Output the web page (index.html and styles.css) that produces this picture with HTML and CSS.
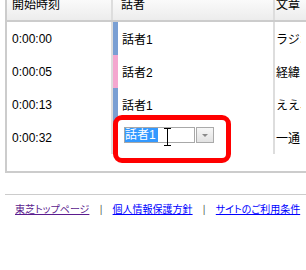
FILE: index.html
```html
<!DOCTYPE html>
<html>
<head>
  <meta charset="UTF-8" />
  <link rel="stylesheet" href="styles.css">
</head>
<body>
  <div id="grid">
    <div class="row head">
      <div class="cell c1"><span>開始時刻</span></div>
      <div class="cell c2"><span>話者</span></div>
      <div class="cell c3"><span>文章</span></div>
    </div>
    <div class="row">
      <div class="cell c1">0:00:00</div>
      <div class="cell c2 blue">話者1</div>
      <div class="cell c3">ラジオの収録です</div>
    </div>
    <div class="row">
      <div class="cell c1">0:00:05</div>
      <div class="cell c2 pink">話者2</div>
      <div class="cell c3">経緯について</div>
    </div>
    <div class="row">
      <div class="cell c1">0:00:13</div>
      <div class="cell c2 blue">話者1</div>
      <div class="cell c3">ええ、そうですね</div>
    </div>
    <div class="row">
      <div class="cell c1">0:00:32</div>
      <div class="cell c2 blue editing">
        <div class="combo">
          <div class="comboText"><span class="selected">話者1</span></div>
          <div class="comboButton"><span class="arrow"></span></div>
        </div>
      </div>
      <div class="cell c3">一通り説明します</div>
    </div>
    <!-- highlight around the edited cell -->
    <div id="mark"></div>
    <svg id="ibeam" width="9" height="18" viewBox="0 0 9 18">
      <path d="M1 0.5h2.5M5.5 0.5h2.5M4.5 1v16M1 17.5h2.5M5.5 17.5h2.5M3 0.5h3M3 17.5h3" stroke="#000" stroke-width="1" fill="none"/>
    </svg>
  </div>

  <div id="footer">
    <a href="#" class="visited">東芝トップページ</a>
    <span class="sep">|</span>
    <a href="#">個人情報保護方針</a>
    <span class="sep">|</span>
    <a href="#">サイトのご利用条件</a>
  </div>
</body>
</html>
```

FILE: styles.css
```css
body {
  margin: 0;
  font-family: "Liberation Sans", "Noto Sans CJK JP", sans-serif;
  font-size: 12px;
  color: #000;
  background: #fff;
}
#grid {
  position: relative;
  margin-left: 5px;
  height: 171px;
  border-left: 2px solid #cccccc;
  border-bottom: 2px solid #cccccc;
  overflow: hidden;
}
.row {
  display: grid;
  grid-template-columns: 106px 162px 26px;
  height: 33px;
}
.row.head {
  height: 22px;
  box-sizing: border-box;
  border-bottom: 2px solid #cccccc;
  background: linear-gradient(#fafafa, #ececec);
  grid-template-columns: 106px 162px 1fr;
}
.cell {
  display: flex;
  align-items: center;
  box-sizing: border-box;
  white-space: nowrap;
  overflow: hidden;
}
.head .cell {
  align-items: flex-start;
  line-height: 12px;
}
.head .cell span {
  margin-top: -1px;
}
.c1 {
  padding-left: 5px;
  border-right: 2px solid #dddddd;
}
.c2 {
  padding-left: 4px;
  border-right: 2px solid #dddddd;
}
.head .c2 {
  padding-left: 8px;
}
.c3 {
  padding-left: 1px;
}
.blue {
  border-left: 5px solid #7a9fd3;
}
.pink {
  border-left: 5px solid #f4a7cf;
}
.c2.editing {
  align-items: flex-start;
  padding-left: 6px;
  padding-top: 6px;
}
.combo {
  display: flex;
}
.comboText {
  width: 71px;
  height: 16px;
  box-sizing: border-box;
  border: 1px solid #a8a8a8;
  background: #fff;
  line-height: 14px;
}
.selected {
  display: inline-block;
  background: #3399ff;
  color: #fff;
  padding-right: 2px;
}
.comboButton {
  width: 18px;
  height: 16px;
  margin-left: 1px;
  box-sizing: border-box;
  border: 1px solid #aaaaaa;
  background: linear-gradient(#f7f7f7, #e2e2e2);
  display: flex;
  align-items: center;
  justify-content: center;
}
.arrow {
  width: 0;
  height: 0;
  border-left: 3px solid transparent;
  border-right: 3px solid transparent;
  border-top: 3px solid #8a8a8a;
}
#mark {
  position: absolute;
  left: 106px;
  top: 115px;
  width: 118px;
  height: 48px;
  box-sizing: border-box;
  border: 5px solid #ff0000;
  border-radius: 9px;
}
#ibeam {
  position: absolute;
  left: 156px;
  top: 128px;
}
/* footer links */
#footer {
  margin-top: 21px;
  margin-left: 5px;
  border-top: 1px solid #cccccc;
  padding: 7px 0 0 10px;
  font-family: "Noto Sans CJK JP", sans-serif;
  font-size: 10px;
  line-height: 13px;
  font-feature-settings: "palt";
}
#footer a {
  color: #0000ff;
}
#footer a.visited {
  color: #5b1b8e;
}
.sep {
  color: #333;
  margin: 0 8px;
}
```
